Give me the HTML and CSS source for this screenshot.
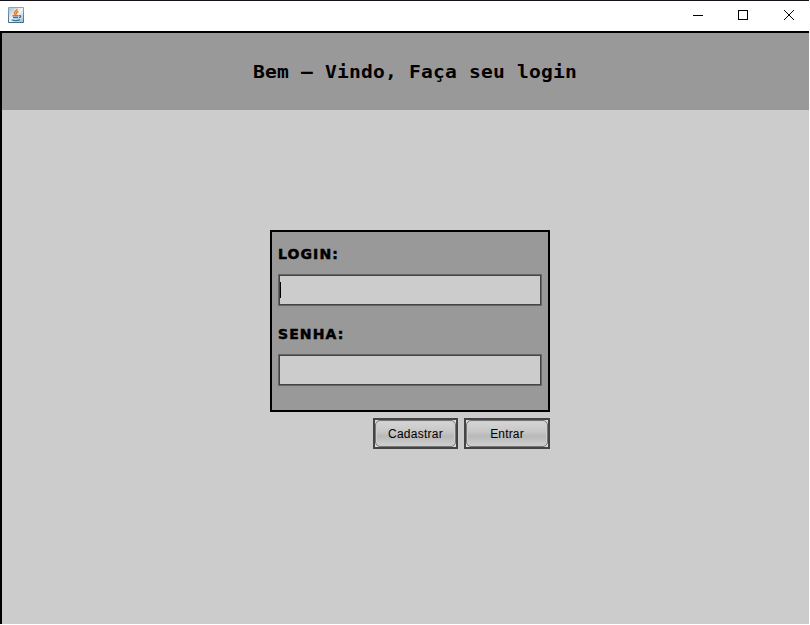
FILE: index.html
```
<!DOCTYPE html>
<html lang="pt-BR">
<head>
<meta charset="utf-8">
<title>Login</title>
<link rel="stylesheet" href="styles.css">
</head>
<body>
<div class="window">
  <header class="titlebar">
    <svg class="app-icon" width="16" height="16" viewBox="0 0 16 16">
      <defs><linearGradient id="tile" x1="0" y1="0" x2="0" y2="1"><stop offset="0" stop-color="#8aa9c0"/><stop offset="1" stop-color="#416b8c"/></linearGradient>
      <linearGradient id="face" x1="0" y1="0" x2="1" y2="1"><stop offset="0" stop-color="#a9c1d2"/><stop offset=".5" stop-color="#f4f7f9"/><stop offset="1" stop-color="#9fbbce"/></linearGradient></defs>
      <rect width="16" height="16" rx="1" fill="url(#tile)"/>
      <rect x="1" y="1" width="14" height="14" fill="url(#face)"/>
      <path d="M9 2C9.500 4 5.500 4.500 6.500 6.500L7.500 8M10.500 4.500C8 5.500 8 6 8.800 7.500" fill="none" stroke="#f07c1c" stroke-width="1.500"/>
      <path d="M4.500 8.900H10.500M5 10.700H10M11 8.700C13.500 8 13 10.500 11 10.700M3.500 12.800C6 13.700 10 13.600 12 12.600" fill="none" stroke="#3f7194" stroke-width="1.200"/>
    </svg>
    <svg class="controls" width="101" height="10" viewBox="0 0 101 10" fill="none" stroke="#000">
      <path d="M0 5.500H10"/>
      <rect x="45.500" y=".5" width="9" height="9"/>
      <path d="M91 0L101 10M101 0L91 10"/>
    </svg>
  </header>
  <main class="content">
    <div class="banner"><h1>Bem – Vindo, Faça seu login</h1></div>
    <form class="login">
      <div class="panel">
        <label for="login">LOGIN:</label>
        <div class="field" id="login"><span class="caret"></span></div>
        <label for="senha">SENHA:</label>
        <div class="field" id="senha"></div>
      </div>
      <div class="actions">
        <button type="button" class="register"><span>Cadastrar</span></button>
        <button type="button" class="enter"><span>Entrar</span></button>
      </div>
    </form>
  </main>
</div>
</body>
</html>
```
FILE: styles.css
```
* { box-sizing: border-box; }
body { margin: 0; background: #fff; overflow: hidden; }
.window { width: 809px; height: 624px; display: flex; flex-direction: column; border-top: 1px solid #15111b; }
.titlebar { height: 30px; flex: none; display: flex; justify-content: space-between; align-items: flex-start; padding: 6px 15px 0 8px; }
.controls { margin-top: 3px; }
.content { flex: 1; border-top: 2px solid #000; border-left: 2px solid #000; background: #ccc; }
.banner { height: 77px; background: #999; padding: 27px 0 0 251px; }
h1 { margin: 0; font: bold 17.5px/24px "DejaVu Sans Mono", monospace; letter-spacing: .18px; white-space: nowrap; transform: scaleX(1.12); transform-origin: 0 0; width: max-content; }
.login { width: 280px; margin: 120px 0 0 268px; }
.panel { height: 182px; border: 2px solid #000; background: #999; padding: 12px 6px 0; }
label { display: block; height: 20px; font: bold 14px/20px "DejaVu Sans", sans-serif; letter-spacing: 1.1px; -webkit-text-stroke: .5px #000; }
.field { height: 32px; margin: 10px 0 18px; border: 2px solid #444; outline: 1px solid #666; outline-offset: -1px; background: #ccc; }
.caret { display: block; width: 1px; height: 16px; margin-top: 6px; background: #000; }
.actions { display: flex; justify-content: flex-end; gap: 6px; margin-top: 6px; }
button { height: 31px; padding: 0; border: 2px solid #444; background: #ddd; font: 12px/14px "Liberation Sans", sans-serif; color: #000; }
button span { display: flex; align-items: center; justify-content: center; height: 27px; border: 1px solid #777; border-radius: 5px; background: linear-gradient(#d6d6d6, #c6c6c6 45%, #b8b8b8 60%, #d0d0d0); box-shadow: inset 0 0 0 1px #ccc; }
.register { width: 85px; letter-spacing: .25px; }
.enter { width: 86px; letter-spacing: .15px; }
```
